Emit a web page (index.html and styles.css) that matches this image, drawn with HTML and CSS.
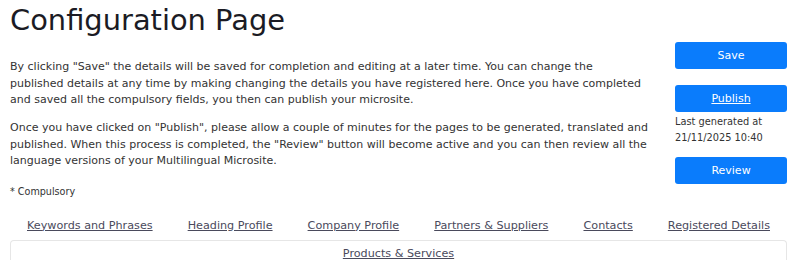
FILE: index.html
```html
<!DOCTYPE html>
<html lang="en">
<head>
<meta charset="utf-8">
<title>Configuration Page</title>
<link rel="stylesheet" href="styles.css">
</head>
<body>
<div class="page">
  <h1 class="title">Configuration Page</h1>
  <div class="top">
    <div class="intro">
      <p>By clicking "Save" the details will be saved for completion and editing at a later time. You can change the published&nbsp;details at any time by making changing the details you have registered here. Once you have completed and saved all the compulsory fields, you then can publish your microsite.</p>
      <p>Once you have clicked on "Publish", please allow a couple of minutes for the pages to be generated, translated and published. When this process is completed, the "Review" button will become active and you can then review all the language versions of your Multilingual Microsite.</p>
      <p class="note">* Compulsory</p>
    </div>
    <aside class="actions">
      <button class="btn">Save</button>
      <button class="btn btn-link">Publish</button>
      <div class="last">Last generated at<br>21/11/2025 10:40</div>
      <button class="btn">Review</button>
    </aside>
  </div>
  <nav class="tabs">
    <a href="#">Keywords and Phrases</a>
    <a href="#">Heading Profile</a>
    <a href="#">Company Profile</a>
    <a href="#">Partners &amp; Suppliers</a>
    <a href="#">Contacts</a>
    <a href="#">Registered Details</a>
  </nav>
  <div class="card">
    <a href="#">Products &amp; Services</a>
  </div>
</div>
</body>
</html>
```
FILE: styles.css
```css
html, body {
  margin: 0;
  padding: 0;
  background: #fff;
}
body {
  font-family: "DejaVu Sans", "Noto Sans", sans-serif;
  color: #333;
}
.page {
  padding: 2px 13px 0 10px;
}
.title {
  margin: 0;
  font-size: 28.9px;
  font-weight: 400;
  line-height: 36px;
  color: #1b1b24;
}
.top {
  display: flex;
  justify-content: space-between;
  align-items: flex-start;
}
.intro {
  width: 640px;
  padding-top: 21px;
}
.intro p {
  margin: 0 0 11.5px;
  font-size: 11px;
  line-height: 16.5px;
}
.intro .note {
  font-size: 9.6px;
  line-height: 14px;
  margin: 15px 0 0;
}
.actions {
  width: 112px;
  padding-top: 4px;
  display: flex;
  flex-direction: column;
}
.btn {
  height: 27px;
  border: 0;
  border-radius: 3px;
  background: #0a7cfc;
  color: #fff;
  font-family: inherit;
  font-size: 11px;
  padding: 0;
}
.btn-link {
  margin-top: 16px;
  text-decoration: underline;
}
.last {
  font-size: 9.8px;
  line-height: 16px;
  color: #333;
  padding: 2px 0 11px;
}
.tabs {
  display: flex;
  justify-content: space-between;
  padding: 18px 17px 0;
  line-height: 18px;
}
.tabs a, .card a {
  font-size: 11.2px;
  color: #4a4a5c;
  text-decoration: underline;
}
.card {
  margin-top: 5px;
  border: 1px solid #e6e6e6;
  border-bottom: 0;
  border-radius: 4px 4px 0 0;
  text-align: center;
  padding-top: 2px;
  line-height: 18px;
  height: 18px;
}
```
